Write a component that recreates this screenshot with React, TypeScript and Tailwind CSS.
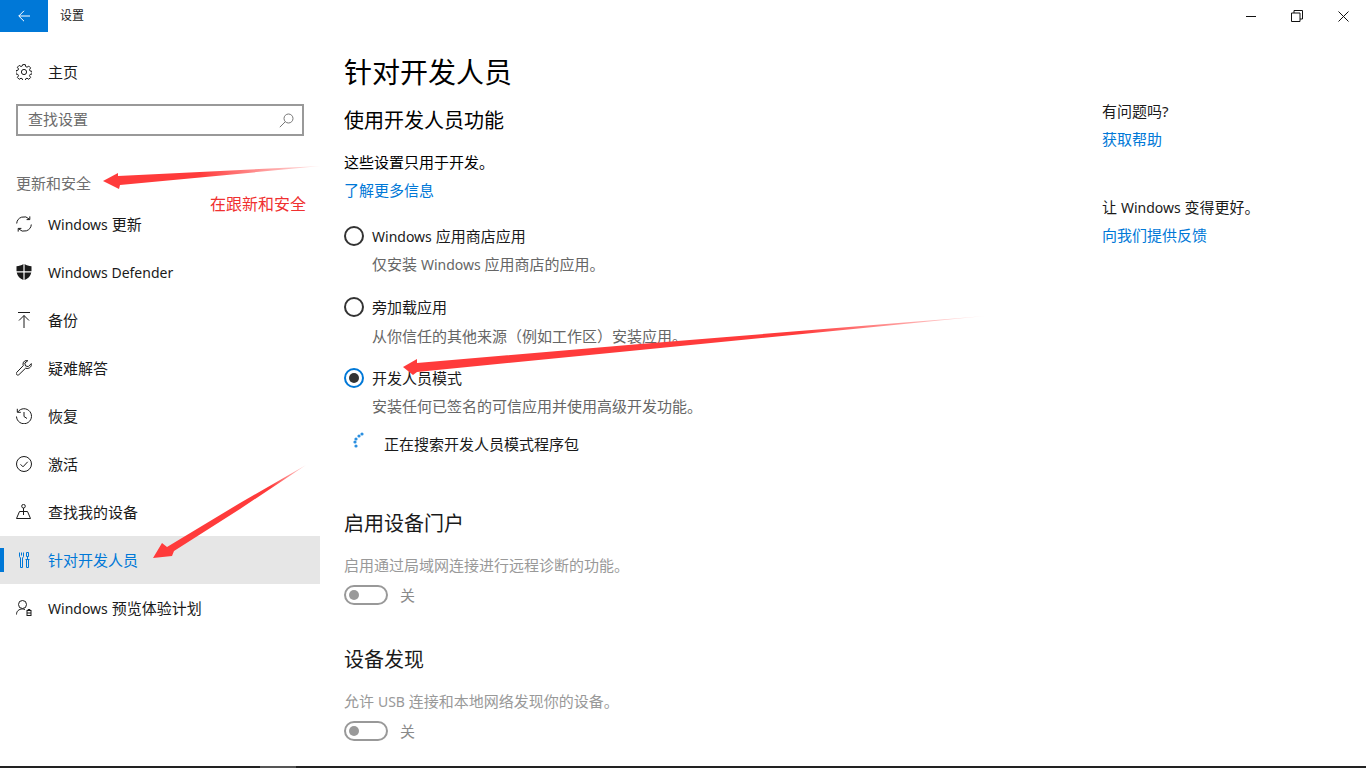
import React from "react";

function GearIcon() {
  return (
    <svg width="16" height="16" viewBox="0 0 16 16" fill="none" stroke="currentColor" strokeWidth="1">
      <circle cx="8" cy="8" r="2.6" />
      <path d="M6.7 0.6h2.6l.4 2 1.3.6 1.8-1.1 1.8 1.8-1.1 1.8.6 1.3 2 .4v2.6l-2 .4-.6 1.3 1.1 1.8-1.8 1.8-1.8-1.1-1.3.6-.4 2H6.7l-.4-2-1.3-.6-1.8 1.1-1.8-1.8 1.1-1.8-.6-1.3-2-.4V6.7l2-.4.6-1.3-1.1-1.8 1.8-1.8 1.8 1.1 1.3-.6z" />
    </svg>
  );
}

function NavIcon({ name }: { name: string }) {
  const common = { width: 16, height: 16, viewBox: "0 0 16 16", fill: "none", stroke: "currentColor", strokeWidth: 1 };
  switch (name) {
    case "update":
      return (
        <svg {...common}>
          <path d="M0.7 7.5A7.3 7.3 0 0 1 13.4 3.2" />
          <path d="M15.3 8.5A7.3 7.3 0 0 1 2.6 12.8" />
          <path d="M13.8 0.4v3.2h-3.2" />
          <path d="M2.2 15.6v-3.2h3.2" />
        </svg>
      );
    case "shield":
      return (
        <svg width="16" height="16" viewBox="0 0 16 16" fill="currentColor">
          <path d="M0.5 2.2C3 2.2 5.5 1.4 7.4 0v7.2H0.5zM8.6 0c1.9 1.4 4.4 2.2 6.9 2.2v5H8.6zM0.7 8.4h6.7V16C4 14.6 1.4 12 0.7 8.4zM8.6 8.4h6.7C14.6 12 12 14.6 8.6 16z" />
        </svg>
      );
    case "backup":
      return (
        <svg {...common}>
          <path d="M2 0.5h12" />
          <path d="M8 16V3.5" />
          <path d="M3 8.5l5-5 5 5" />
        </svg>
      );
    case "wrench":
      return (
        <svg {...common}>
          <path d="M15.3 3.6l-3 3-2.8-.7-.7-2.800 3-2.400c-2-.6-4.800.4-4.800 3.400 0 .7.1 1.100.3 1.500L0.900 12.200c-.8.800-.8 1.700-.2 2.400.7.700 1.700.6 2.400-.1l6.500-6.300c.5.200.9.300 1.500.3 3 0 4.800-2.600 4.200-4.900z" />
        </svg>
      );
    case "history":
      return (
        <svg {...common}>
          <path d="M1.800 4A7.500 7.500 0 1 1 .5 8.500" />
          <path d="M1.300 .8V4.300h3.500" />
          <path d="M8 4v4.500l3 2" />
        </svg>
      );
    case "check":
      return (
        <svg {...common}>
          <circle cx="8" cy="8" r="7.500" />
          <path d="M4.500 8.300l2.500 2.500 4.700-5" />
        </svg>
      );
    case "find":
      return (
        <svg {...common}>
          <circle cx="7.500" cy="2.200" r="1.800" />
          <path d="M7.500 4v7" />
          <path d="M3.500 7.500h8l3 7H.5z" />
        </svg>
      );
    case "dev":
      return (
        <svg {...common}>
          <path d="M3.500 .5v4l1 1.500v9.500h2V6l1-1.500V.5" />
          <path d="M5.500 .5v3" />
          <path d="M10.500 .5h2v4h-2z" />
          <path d="M11.500 4.500v3" />
          <path d="M9.500 7.500h4" />
          <path d="M10.500 7.500v8h2v-8" />
        </svg>
      );
    default:
      return (
        <svg {...common}>
          <circle cx="6.500" cy="4.500" r="4" />
          <path d="M.5 14.500c0-3.500 2.500-5.500 6-5.500 1 0 1.800.2 2.500.5" />
          <rect x="11" y="10.500" width="4" height="5" />
          <path d="M11 13h4" />
          <path d="M12 10.500v-1h2v1" />
        </svg>
      );
  }
}

function Latin({ children }: { children: React.ReactNode }) {
  return <span className="text-sm">{children}</span>;
}

const navItems = [
  { icon: "update", label: <><Latin>Windows</Latin> 更新</> },
  { icon: "shield", label: <Latin>Windows Defender</Latin> },
  { icon: "backup", label: "备份" },
  { icon: "wrench", label: "疑难解答" },
  { icon: "history", label: "恢复" },
  { icon: "check", label: "激活" },
  { icon: "find", label: "查找我的设备" },
  { icon: "dev", label: "针对开发人员", active: true },
  { icon: "insider", label: <><Latin>Windows</Latin> 预览体验计划</> },
];

function Radio({ checked }: { checked?: boolean }) {
  return (
    <span
      className={
        checked
          ? "w-5 h-5 rounded-full border-2 border-[#0078d7] flex items-center justify-center shrink-0"
          : "w-5 h-5 rounded-full border-2 border-[#333333] shrink-0"
      }
    >
      {checked && <span className="w-2.5 h-2.5 rounded-full bg-[#333333]" />}
    </span>
  );
}

function Toggle() {
  return (
    <div className="flex items-center h-5 mt-2">
      <span className="w-11 h-5 rounded-full border-2 border-[#999999] flex items-center pl-[3px]">
        <span className="w-2.5 h-2.5 rounded-full bg-[#999999]" />
      </span>
      <span className="ml-3 text-[#8a8a8a]">关</span>
    </div>
  );
}

function Arrows() {
  return (
    <svg className="absolute left-0 top-0 pointer-events-none" width="1366" height="768" viewBox="0 0 1366 768">
      <defs>
        <linearGradient id="a1" gradientUnits="userSpaceOnUse" x1="320" y1="166" x2="200" y2="175">
          <stop offset="0" stopColor="#ff3b3b" stopOpacity="0.1" />
          <stop offset="1" stopColor="#ff3b3b" />
        </linearGradient>
        <linearGradient id="a2" gradientUnits="userSpaceOnUse" x1="985" y1="316" x2="800" y2="335">
          <stop offset="0" stopColor="#ff3b3b" stopOpacity="0.1" />
          <stop offset="1" stopColor="#ff3b3b" />
        </linearGradient>
        <linearGradient id="a3" gradientUnits="userSpaceOnUse" x1="306" y1="465" x2="270" y2="487">
          <stop offset="0" stopColor="#ff3b3b" stopOpacity="0.2" />
          <stop offset="1" stopColor="#ff3b3b" />
        </linearGradient>
      </defs>
      <polygon points="103,181 118,173 118,176 321,166 120,185 119,189" fill="url(#a1)" />
      <polygon points="403,367 417,359 417,363 640,344 985,316 640,350 417,372 413,375" fill="url(#a2)" />
      <polygon points="153,558 162,543 167,547 240,503 306,465 240,509 174,551 172,556" fill="url(#a3)" />
    </svg>
  );
}

export default function App() {
  return (
    <div className="relative w-[1366px] h-[768px] overflow-hidden bg-white flex flex-col text-[15px] text-[#1a1a1a] font-['Noto_Sans','Noto_Sans_CJK_SC',sans-serif]">
      {/* Title bar */}
      <div className="h-8 flex items-center shrink-0">
        <div className="w-12 h-8 bg-[#0078d7] flex items-center justify-center text-white">
          <svg width="12" height="12" viewBox="0 0 12 12" fill="none" stroke="currentColor">
            <path d="M12 6H.8" />
            <path d="M6 .8L.8 6 6 11.200" />
          </svg>
        </div>
        <span className="ml-3 text-xs">设置</span>
        <div className="ml-auto flex h-8 text-[#111111]">
          <div className="w-[46px] flex items-center justify-center">
            <svg width="10" height="10" viewBox="0 0 10 10" fill="none" stroke="currentColor">
              <path d="M0 5.500h10" />
            </svg>
          </div>
          <div className="w-[46px] flex items-center justify-center">
            <svg width="12" height="12" viewBox="0 0 12 12" fill="none" stroke="currentColor">
              <path d="M.5 3h8.500v8.500H.5z" />
              <path d="M3 3V.5h8.500V9H9" />
            </svg>
          </div>
          <div className="w-[46px] flex items-center justify-center">
            <svg width="11" height="11" viewBox="0 0 11 11" fill="none" stroke="currentColor">
              <path d="M.5 .5l10 10M10.500 .5l-10 10" />
            </svg>
          </div>
        </div>
      </div>

      <div className="flex flex-1 min-h-0">
        {/* Sidebar */}
        <div className="w-80 shrink-0 flex flex-col">
          <div className="h-12 mt-4 flex items-center pl-4 gap-4">
            <GearIcon />
            <span>主页</span>
          </div>
          <div className="mx-4 mt-2 h-8 border-2 border-[#999999] flex items-center justify-between pl-2.5 pr-2 text-[#6b6b6b]">
            <span className="-mt-0.5">查找设置</span>
            <svg width="15" height="15" viewBox="0 0 15 15" fill="none" stroke="#777777">
              <circle cx="9.500" cy="5.500" r="4.500" />
              <path d="M6.300 8.700L.8 14.200" />
            </svg>
          </div>
          <div className="h-6 mt-[35px] pl-4 leading-6 text-[#6e6e6e]">更新和安全</div>
          <div className="mt-[5px] flex flex-col">
            {navItems.map((item) => (
              <div
                key={item.icon}
                className={
                  item.active
                    ? "relative h-12 flex items-center pl-4 gap-4 bg-[#e6e6e6] text-[#0078d7]"
                    : "h-12 flex items-center pl-4 gap-4"
                }
              >
                {item.active && <span className="absolute left-0 top-3 w-1 h-6 bg-[#0078d7]" />}
                <NavIcon name={item.icon} />
                <span>{item.label}</span>
              </div>
            ))}
          </div>
        </div>

        {/* Main */}
        <div className="w-[782px] pl-6 shrink-0 flex flex-col">
          <h1 className="h-10 mt-5 leading-10 text-[28px] text-black">针对开发人员</h1>
          <h2 className="h-8 mt-[13px] leading-8 text-xl text-black">使用开发人员功能</h2>
          <p className="h-6 mt-[13px] leading-6 text-black">这些设置只用于开发。</p>
          <a className="h-6 mt-1 leading-6 text-[#0078d7]">了解更多信息</a>

          <div className="h-6 mt-[22px] flex items-center gap-2">
            <Radio />
            <span><Latin>Windows</Latin> 应用商店应用</span>
          </div>
          <p className="h-6 mt-1 pl-7 leading-6 text-[#666666]">仅安装 <Latin>Windows</Latin> 应用商店的应用。</p>
          <div className="h-6 mt-[19px] flex items-center gap-2">
            <Radio />
            <span>旁加载应用</span>
          </div>
          <p className="h-6 mt-[5px] pl-7 leading-6 text-[#666666]">
            从你信任的其他来源<span className="font-['Noto_Sans_CJK_TC']">（</span>例如工作区<span className="font-['Noto_Sans_CJK_TC']">）</span>安装应用。
          </p>
          <div className="h-6 mt-[18px] flex items-center gap-2">
            <Radio checked />
            <span>开发人员模式</span>
          </div>
          <p className="h-6 mt-1 pl-7 leading-6 text-[#666666]">安装任何已签名的可信应用并使用高级开发功能。</p>
          <div className="h-6 mt-3.5 flex items-start">
            <svg className="ml-2" width="12" height="16" viewBox="0 0 12 16" fill="#2b8fe0">
              <circle cx="10" cy="2" r="1.600" />
              <circle cx="7" cy="4" r="1.600" />
              <circle cx="4" cy="7" r="1.600" />
              <circle cx="3" cy="10" r="1.600" />
              <circle cx="4" cy="14" r="1.600" />
            </svg>
            <span className="ml-5 leading-6">正在搜索开发人员模式程序包</span>
          </div>

          <h2 className="h-8 mt-[52px] leading-8 text-xl text-[#1a1a1a]">启用设备门户</h2>
          <p className="h-6 mt-[13px] leading-6 text-[#999999]">启用通过局域网连接进行远程诊断的功能。</p>
          <Toggle />

          <h2 className="h-8 mt-[39px] leading-8 text-xl text-[#1a1a1a]">设备发现</h2>
          <p className="h-6 mt-[13px] leading-6 text-[#999999]">允许 <Latin>USB</Latin> 连接和本地网络发现你的设备。</p>
          <Toggle />
        </div>

        {/* Right column */}
        <div className="flex-1 flex flex-col">
          <p className="h-6 mt-[67px] leading-6">有问题吗?</p>
          <a className="h-6 mt-1 leading-6 text-[#0078d7]">获取帮助</a>
          <p className="h-6 mt-11 leading-6">让 <Latin>Windows</Latin> 变得更好。</p>
          <a className="h-6 mt-1 leading-6 text-[#0078d7]">向我们提供反馈</a>
        </div>
      </div>

      {/* Taskbar edge */}
      <div className="h-[2px] shrink-0 bg-[#222222] flex">
        <span className="ml-[260px] w-9 bg-[#555555]" />
      </div>

      <Arrows />
      <span className="absolute left-[210px] top-[192px] leading-6 text-base text-[#f03030]">在跟新和安全</span>
    </div>
  );
}
